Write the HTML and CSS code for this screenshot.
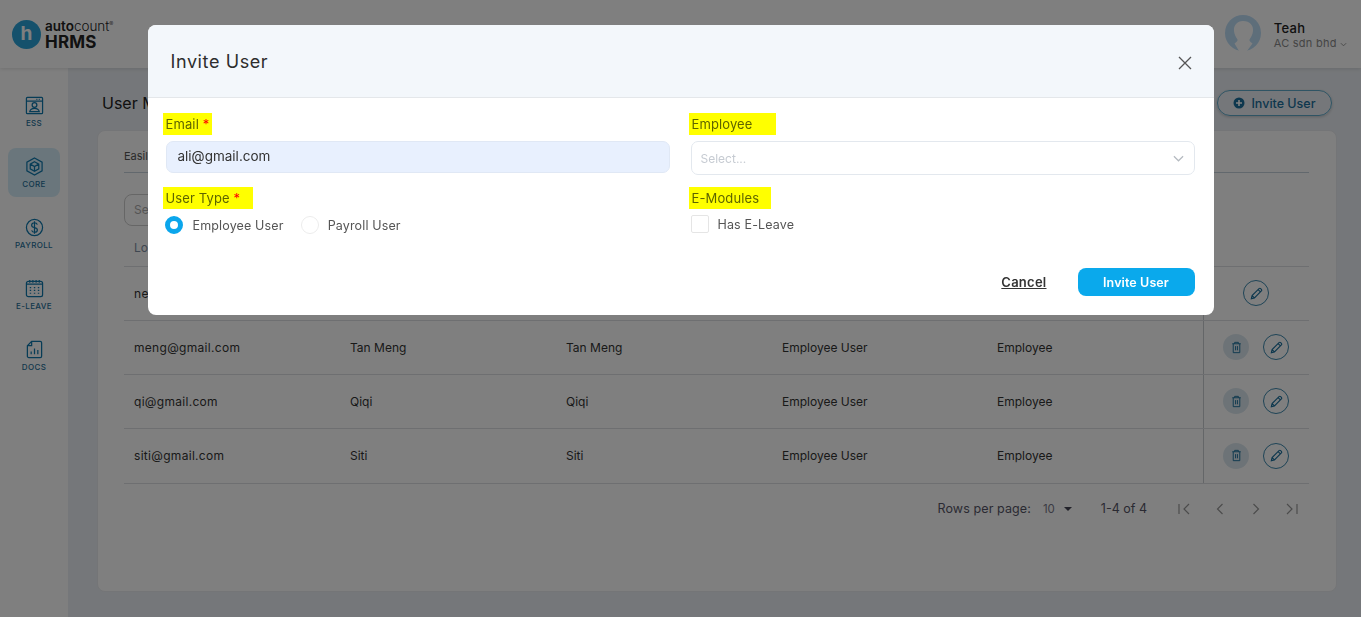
FILE: index.html
```html
<!DOCTYPE html>
<html lang="en">
<head>
<meta charset="utf-8">
<title>Invite User</title>
<link rel="stylesheet" href="styles.css">
</head>
<body>
<div class="app">
  <header class="topbar">
    <div class="logo">
      <span class="logo-mark">h</span>
      <span class="logo-text"><span class="logo-auto"><b>auto</b>count<sup>®</sup></span><span class="logo-hrms">HRMS</span></span>
    </div>
    <div class="user">
      <svg class="avatar" viewBox="0 0 36 36"><circle cx="18" cy="18" r="18" fill="#bcdcf5"/><path d="M18 6c-6 0-9.500 4.500-9 10 .3 3.500 2 6.500 3.500 8.500.4 1-.5 2-3 4L14 36h8l5.500-7.500c-2.500-2-3.400-3-3-4C26 22.500 27.700 19.500 28 16c.5-5.500-3-10-10-10z" fill="#fff"/></svg>
      <div class="user-text">
        <div class="user-name">Teah</div>
        <div class="user-co">AC sdn bhd <svg class="mini-chev" viewBox="0 0 8 5"><path d="M1 1l3 3 3-3" fill="none" stroke="currentColor"/></svg></div>
      </div>
    </div>
  </header>
  <div class="below">
    <nav class="side">
      <a class="side-item"><svg class="side-icon" viewBox="0 0 20 20"><rect x="1.500" y="1.500" width="17" height="17" rx="1"/><path d="M1.500 5.500h17M12 3.500h1M14.500 3.500h1"/><circle cx="10" cy="9.500" r="2.500"/><path d="M5 16.500c.5-2.500 2.500-3.500 5-3.500s4.500 1 5 3.500z"/></svg><span>ESS</span></a>
      <a class="side-item active"><svg class="side-icon" viewBox="0 0 20 20"><path d="M10 1l8 4.500v9L10 19l-8-4.500v-9z"/><path d="M10 5l4.500 2.500v5L10 15l-4.500-2.500v-5zM5.500 7.500L10 10l4.500-2.500M10 10v5"/></svg><span>CORE</span></a>
      <a class="side-item"><svg class="side-icon" viewBox="0 0 20 20"><circle cx="10" cy="10" r="8.500"/><path d="M13 7c-.5-1.300-1.700-2-3-2-1.800 0-3 1-3 2.500S8.200 9.700 10 10s3 1 3 2.500-1.200 2.500-3 2.500c-1.300 0-2.500-.7-3-2M10 3.500v13"/></svg><span>PAYROLL</span></a>
      <a class="side-item"><svg class="side-icon" viewBox="0 0 20 20"><rect x="1.500" y="2.500" width="17" height="16" rx="2"/><path d="M5 1v3M8.300 1v3M11.700 1v3M15 1v3M1.500 5.500h17M5 9h1.500M9.300 9h1.500M13.500 9h1.500M5 12h1.500M9.300 12h1.500M13.500 12h1.500M5 15h1.500M9.300 15h1.500M13.500 15h1.500"/></svg><span>E-LEAVE</span></a>
      <a class="side-item"><svg class="side-icon" viewBox="0 0 20 20"><path d="M7 1.500h9a1.500 1.500 0 0 1 1.500 1.500v14a1.500 1.500 0 0 1-1.500 1.500H4A1.500 1.500 0 0 1 2.500 17V6zM7 1.500V6H2.500"/><path d="M6.500 15v-3M10 15V9M13.500 15v-4.500"/></svg><span>DOCS</span></a>
    </nav>
    <main class="main">
      <div class="title-row">
        <h1 class="page-title">User Management</h1>
        <button class="btn-outline"><svg class="plus" viewBox="0 0 12 12"><circle cx="6" cy="6" r="5.500" fill="currentColor"/><path d="M6 3v6M3 6h6" stroke="#fff" stroke-width="1.600"/></svg>Invite User</button>
      </div>
      <section class="card">
        <div class="tabs">Easily</div>
        <div class="search">Search</div>
        <table class="table">
          <thead>
            <tr><th>Login</th><th></th><th></th><th></th><th></th><th class="act"></th></tr>
          </thead>
          <tbody>
            <tr><td class="email">new</td><td></td><td></td><td></td><td></td>
              <td class="act"><span class="acts"><span class="icon-btn edit"><svg viewBox="0 0 16 16"><use href="#pencil"/></svg></span></span></td></tr>
            <tr><td class="email">meng@gmail.com</td><td>Tan Meng</td><td>Tan Meng</td><td>Employee User</td><td>Employee</td>
              <td class="act"><span class="acts"><span class="icon-btn del"><svg viewBox="0 0 16 16"><use href="#trash"/></svg></span><span class="icon-btn edit"><svg viewBox="0 0 16 16"><use href="#pencil"/></svg></span></span></td></tr>
            <tr><td class="email">qi@gmail.com</td><td>Qiqi</td><td>Qiqi</td><td>Employee User</td><td>Employee</td>
              <td class="act"><span class="acts"><span class="icon-btn del"><svg viewBox="0 0 16 16"><use href="#trash"/></svg></span><span class="icon-btn edit"><svg viewBox="0 0 16 16"><use href="#pencil"/></svg></span></span></td></tr>
            <tr class="row-last"><td class="email">siti@gmail.com</td><td>Siti</td><td>Siti</td><td>Employee User</td><td>Employee</td>
              <td class="act"><span class="acts"><span class="icon-btn del"><svg viewBox="0 0 16 16"><use href="#trash"/></svg></span><span class="icon-btn edit"><svg viewBox="0 0 16 16"><use href="#pencil"/></svg></span></span></td></tr>
          </tbody>
        </table>
        <div class="pager">
          <span class="pager-label">Rows per page:</span>
          <span class="pager-size">10</span>
          <span class="pager-caret"></span>
          <span class="pager-count">1-4 of 4</span>
          <span class="pager-icons">
            <svg viewBox="0 0 14 14"><path d="M2 2v10M12 2L7 7l5 5"/></svg>
            <svg viewBox="0 0 14 14"><path d="M9.500 2l-5 5 5 5"/></svg>
            <svg viewBox="0 0 14 14"><path d="M4.500 2l5 5-5 5"/></svg>
            <svg viewBox="0 0 14 14"><path d="M2 2l5 5-5 5M12 2v10"/></svg>
          </span>
        </div>
      </section>
    </main>
  </div>
</div>

<svg class="defs" width="0" height="0">
  <symbol id="pencil" viewBox="0 0 16 16"><path d="M2.500 13.500l.8-3.300 7.400-7.400a1.200 1.200 0 0 1 1.700 0l.8.800a1.200 1.200 0 0 1 0 1.700l-7.400 7.400zM3.300 10.200l2.500 2.500M9.700 3.800l2.500 2.500" fill="none" stroke="currentColor" stroke-width="1.200"/></symbol>
  <symbol id="trash" viewBox="0 0 16 16"><path d="M3.500 4h9M6 4V2.500h4V4M4.500 4v9.500h7V4M7 6.500v4.500M9 6.500v4.500" fill="none" stroke="currentColor" stroke-width="1"/></symbol>
</svg>

<div class="overlay">
  <div class="modal">
    <div class="modal-head">
      <h2 class="modal-title">Invite User</h2>
      <svg class="close" viewBox="0 0 14 14"><path d="M1 1l12 12M13 1L1 13"/></svg>
    </div>
    <div class="modal-body">
      <div class="form-grid">
        <div class="field">
          <div class="label-row"><span class="mark">Email <i>*</i></span></div>
          <div class="input-filled">ali@gmail.com</div>
        </div>
        <div class="field">
          <div class="label-row"><span class="mark mark-wide">Employee</span></div>
          <div class="select"><span>Select...</span><svg viewBox="0 0 12 7"><path d="M1 1l5 5 5-5"/></svg></div>
        </div>
        <div class="field field-second">
          <div class="label-row"><span class="mark mark-type">User Type <i>*</i></span></div>
          <div class="options">
            <span class="opt"><span class="radio on"></span>Employee User</span>
            <span class="opt"><span class="radio"></span>Payroll User</span>
          </div>
        </div>
        <div class="field field-second">
          <div class="label-row"><span class="mark mark-mod">E-Modules</span></div>
          <div class="options options-check">
            <span class="opt"><span class="check"></span>Has E-Leave</span>
          </div>
        </div>
      </div>
      <div class="modal-foot">
        <a class="cancel">Cancel</a>
        <button class="btn-primary">Invite User</button>
      </div>
    </div>
  </div>
</div>
</body>
</html>
```
FILE: styles.css
```css
* { box-sizing: border-box; }
html, body { margin: 0; height: 100%; overflow: hidden; }
body { font-family: Inter, "Liberation Sans", sans-serif; color: #2c2c2c; background: #ebeff4; }

.app { height: 100vh; display: flex; flex-direction: column; }
.topbar { height: 68px; flex: none; background: #fff; display: flex; justify-content: space-between; align-items: center; padding: 0 14px 0 12px; box-shadow: 0 1px 4px rgba(0,0,0,.12); position: relative; }
.logo { display: flex; align-items: center; gap: 4px; }
.logo-mark { width: 29px; height: 29px; border-radius: 50%; background: #2aa3d8; color: #fff; font: 700 19px/27px Inter, sans-serif; text-align: center; }
.logo-text { display: flex; flex-direction: column; color: #222; padding-top: 1px; }
.logo-auto { font-size: 13.500px; font-weight: 300; line-height: 15px; }
.logo-auto b { font-weight: 600; }
.logo-auto sup { font-size: 6px; line-height: 0; }
.logo-hrms { font-size: 17px; font-weight: 700; line-height: 17px; letter-spacing: .2px; }
.user { display: flex; align-items: center; gap: 13px; margin-top: -3px; }
.avatar { width: 36px; height: 36px; }
.user-text { padding-top: 4px; }
.user-name { font-size: 13px; font-weight: 500; line-height: 16px; color: #222; letter-spacing: .3px; }
.user-co { font-size: 11px; line-height: 14px; color: #8a8a8a; letter-spacing: .25px; white-space: nowrap; }
.mini-chev { width: 7px; height: 5px; }

.below { flex: 1; display: flex; min-height: 0; }
.side { width: 68px; flex: none; background: #fff; padding: 19px 8px 0; display: flex; flex-direction: column; }
.side-item { height: 49px; margin-bottom: 12px; border-radius: 8px; display: flex; flex-direction: column; align-items: center; justify-content: center; gap: 3px; color: #1f6f99; font-size: 8px; font-weight: 500; letter-spacing: .35px; }
.side-item.active { background: #d5edf8; }
.side-icon { width: 19px; height: 19px; fill: none; stroke: #0f78ad; stroke-width: 1.300; }

.main { flex: 1; min-width: 0; padding: 21px 24px 25px 29px; display: flex; flex-direction: column; }
.title-row { height: 41px; flex: none; display: flex; justify-content: space-between; align-items: flex-start; padding: 0 5px; }
.page-title { margin: 4px 0 0; font-size: 16px; font-weight: 400; color: #222; }
.btn-outline { width: 115px; height: 26px; margin-top: 1px; border: 1.500px solid #5ea9c9; border-radius: 13px; background: transparent; color: #1b6f9c; font: 500 12.500px Inter, sans-serif; display: flex; align-items: center; justify-content: center; gap: 6px; padding: 0; box-shadow: 0 1px 3px rgba(0,0,0,.2); }
.plus { width: 12px; height: 12px; }

.card { flex: 1; background: #fff; border: 1px solid #e8eaee; border-radius: 8px; padding: 0 27px 0 26px; display: flex; flex-direction: column; }
.tabs { height: 42px; flex: none; border-bottom: 1px solid #c5d0da; padding-top: 18px; font-size: 11px; line-height: 14px; color: #555; }
.search { width: 240px; height: 32px; flex: none; margin-top: 21px; border: 1px solid #ccc; border-radius: 8px; padding: 0 9px; font-size: 12px; line-height: 30px; color: #aaa; }

.table { width: 100%; border-collapse: collapse; table-layout: fixed; font-size: 12px; margin-top: 4px; }
.table th { height: 36px; padding: 0 0 0 10px; width: 216px; text-align: left; font-weight: 400; color: #7e8ea3; border-bottom: 1px solid #dcdfe3; }
.table th:nth-child(4) { width: 215px; }
.table td { height: 54px; padding: 0 0 0 10px; color: #333; border-bottom: 1px solid #dcdfe3; }
.table td.email { letter-spacing: .3px; }
.row-last td { height: 55px; }
.table th.act, .table td.act { width: 106px; padding: 0; border-left: 1px solid #c8ccd0; }
.acts { display: flex; justify-content: center; gap: 14px; align-items: center; }
.icon-btn { width: 26px; height: 26px; border-radius: 50%; display: flex; align-items: center; justify-content: center; color: #1a6f9c; }
.icon-btn svg { width: 15px; height: 15px; }
.icon-btn.del { background: #dbe7ee; }
.icon-btn.edit { border: 1px solid #3c88ad; }

.pager { display: flex; align-items: center; justify-content: flex-end; height: 50px; font-size: 12.500px; color: #667; }
.pager-label { color: #556; letter-spacing: .1px; }
.pager-size { margin-left: 12px; font-size: 11.500px; color: #778; }
.pager-caret { margin-left: 9px; border: 4px solid transparent; border-top: 4px solid #445; border-bottom: 0; }
.pager-count { margin-left: 29px; color: #556; }
.pager-icons { margin-left: 30px; margin-right: 10px; display: flex; gap: 22px; }
.pager-icons svg { width: 14px; height: 14px; fill: none; stroke: #999; stroke-width: 1.200; }

.defs { position: absolute; }
.overlay { position: fixed; inset: 0; background: rgba(0,0,0,.5); display: flex; justify-content: center; align-items: flex-start; padding-top: 25px; }
.modal { width: 1066px; height: 290px; background: #fff; border-radius: 8px; overflow: hidden; display: flex; flex-direction: column; }
.modal-head { height: 73px; flex: none; background: #f3f7fb; border-bottom: 1px solid #e4e7ea; display: flex; justify-content: space-between; align-items: center; padding: 0 22px 0 23px; }
.modal-title { margin: 1px 0 0; font-size: 18px; font-weight: 400; color: #2d2d2d; letter-spacing: .6px; }
.close { width: 14px; height: 14px; margin-top: 4px; fill: none; stroke: #555; stroke-width: 1.300; }
.modal-body { flex: 1; display: flex; flex-direction: column; justify-content: space-between; padding: 15px 19px 19px 15px; }
.form-grid { display: grid; grid-template-columns: 507px 506px; column-gap: 19px; }
.field { display: flex; flex-direction: column; }
.field-second { margin-top: 12px; }
.label-row { height: 22px; }
.mark { display: inline-block; height: 22px; padding: 0 3px; background: #ff0; color: #5e6400; font-size: 13px; line-height: 23px; letter-spacing: .12px; }
.mark i { color: #f00; font-style: normal; }
.mark-wide { width: 87px; }
.mark-type { width: 90px; }
.mark-mod { width: 82px; }
.input-filled { margin: 6px 0 0 3px; width: 504px; height: 32px; border-radius: 7px; background: #e8f0fe; border: 1px solid #e0e8f5; padding: 0 11px; font-size: 13.500px; line-height: 28px; color: #333; }
.select { margin: 6px 0 0 2px; width: 504px; height: 34px; border: 1px solid #e3e8ee; border-radius: 7px; display: flex; align-items: center; justify-content: space-between; padding: 0 10px 0 9px; font-size: 12px; color: #c6cbd2; }
.select svg { width: 11px; height: 7px; fill: none; stroke: #b5bac0; stroke-width: 1.300; }
.options { display: flex; gap: 16px; margin-top: 6px; height: 20px; align-items: center; padding-left: 1px; }
.options-check { margin-top: 5px; }
.opt { display: flex; align-items: center; font-size: 12.500px; color: #555; letter-spacing: .15px; }
.radio { width: 18px; height: 18px; margin: 0 9px 0 1px; border: 1.500px solid #ececec; border-radius: 50%; }
.radio.on { border: 5px solid #0ba6ec; margin-right: 10px; }
.check { width: 18px; height: 18px; margin: 0 9px 0 1px; border: 1.500px solid #e5e5e5; border-radius: 2px; }
.modal-foot { display: flex; justify-content: flex-end; align-items: center; gap: 31px; }
.cancel { font-size: 13px; font-weight: 600; color: #333; text-decoration: underline; letter-spacing: .25px; }
.btn-primary { width: 117px; height: 28px; border: 0; border-radius: 8px; background: #0aa9ec; color: #fff; font: 600 12.500px Inter, sans-serif; letter-spacing: .1px; }
```
